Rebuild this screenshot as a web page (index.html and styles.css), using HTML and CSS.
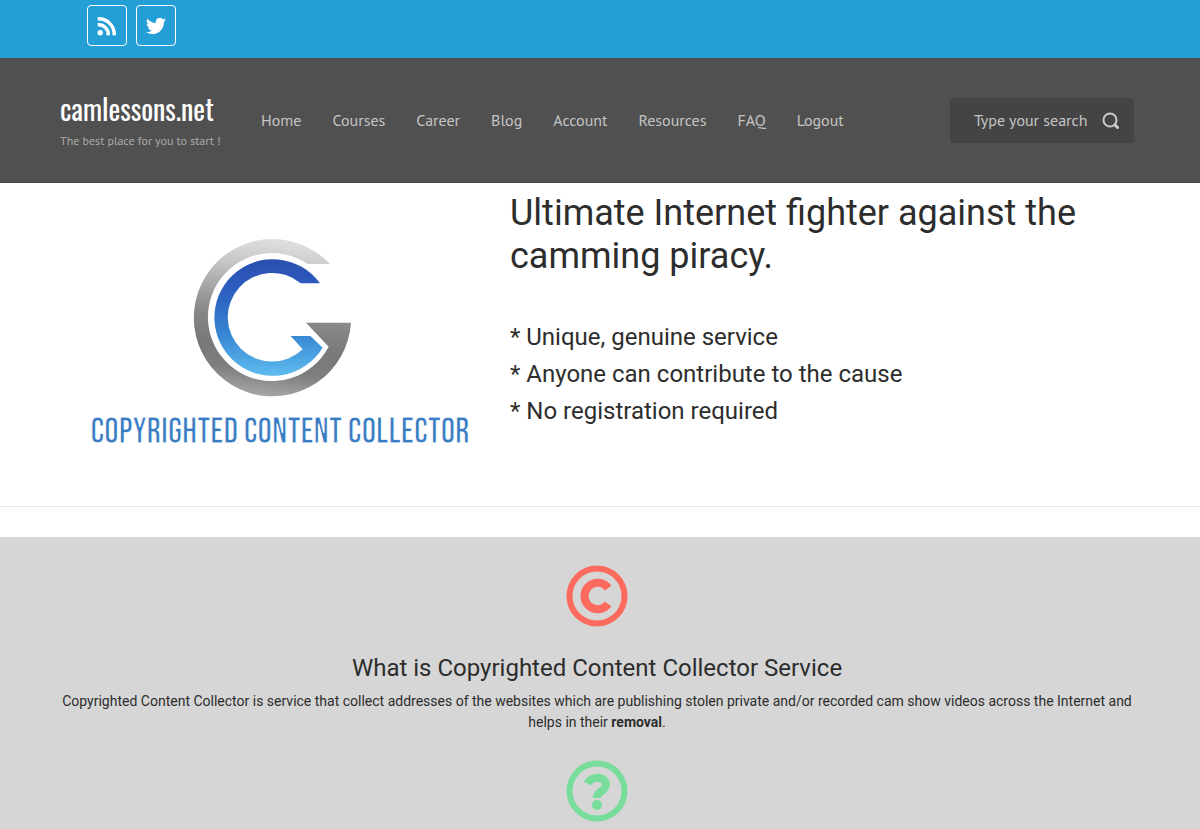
FILE: index.html
```html
<!DOCTYPE html>
<html lang="en">
    <head>
        <title>camlessons.net</title>
        <meta charset="UTF-8" />
        <meta name="viewport" content="width=device-width, initial-scale=1" />
        <link rel="stylesheet" href="styles.css">
    </head>
    <body>
        <div class="topbar">
            <a class="social" href="#" aria-label="RSS feed">
                <svg width="20" height="20" viewBox="0 0 20 20" fill="none" stroke="#fff" stroke-width="3.4">
                    <circle cx="3.2" cy="16.8" r="2.7" fill="#fff" stroke="none" />
                    <path d="M0.7 8.8A9.6 9.6 0 0 1 11.2 19.4" />
                    <path d="M0.7 2.8A15.6 15.6 0 0 1 17.2 19.4" />
                </svg>
            </a>
            <a class="social" href="#" aria-label="Twitter">
                <svg width="20" height="20" viewBox="0 0 24 24" fill="#fff">
                    <path d="M23.9 4.6a10 10 0 0 1-2.8.8 4.9 4.9 0 0 0 2.2-2.7 10 10 0 0 1-3.1 1.2 4.9 4.9 0 0 0-8.4 4.5A14 14 0 0 1 1.7 3.2a4.9 4.9 0 0 0 1.5 6.5 4.9 4.9 0 0 1-2.2-.6v.1a4.9 4.9 0 0 0 3.9 4.8 5 5 0 0 1-2.2.1 4.9 4.9 0 0 0 4.6 3.4A9.9 9.9 0 0 1 0 19.5a14 14 0 0 0 7.5 2.2c9.1 0 14-7.5 14-14v-.6a10 10 0 0 0 2.4-2.5z" />
                </svg>
            </a>
        </div>
        <header class="header">
            <div class="brand">
                <a class="brand-name" href="#">camlessons.net</a>
                <p class="tagline">The best place for you to start !</p>
            </div>
            <nav class="nav">
                <a href="#">Home</a>
                <a href="#">Courses</a>
                <a href="#">Career</a>
                <a href="#">Blog</a>
                <a href="#">Account</a>
                <a href="#">Resources</a>
                <a href="#">FAQ</a>
                <a href="#">Logout</a>
            </nav>
            <form class="search">
                <input type="text" placeholder="Type your search" aria-label="Type your search" />
                <button type="submit" aria-label="Search">
                    <svg width="18" height="18" viewBox="0 0 18 18" fill="none" stroke="#ccc" stroke-width="2">
                        <circle cx="8" cy="9" r="6.5" />
                        <path d="M13 14L15.5 16.5" stroke-width="3" stroke-linecap="round" />
                    </svg>
                </button>
            </form>
        </header>
        <main>
            <section class="hero">
                <div class="logo">
                    <svg class="logo-mark" width="190" height="185" viewBox="0 0 570 555">
                        <defs>
                            <linearGradient id="gray" gradientUnits="userSpaceOnUse" x1="330" y1="41" x2="277" y2="513">
                                <stop offset="0" stop-color="#e2e2e2" />
                                <stop offset="0.2" stop-color="#c4c4c4" />
                                <stop offset="0.5" stop-color="#8a8888" />
                                <stop offset="0.7" stop-color="#7a7777" />
                                <stop offset="0.85" stop-color="#807d7d" />
                                <stop offset="1" stop-color="#a6a4a4" />
                            </linearGradient>
                            <linearGradient id="blue" x1="0" y1="0" x2="0" y2="1">
                                <stop offset="0" stop-color="#2a4fb0" />
                                <stop offset="0.25" stop-color="#2c5cbe" />
                                <stop offset="0.65" stop-color="#3787d2" />
                                <stop offset="1" stop-color="#5fbcf0" />
                            </linearGradient>
                        </defs>
                        <path fill="url(#gray)" d="M450 117H383A192 192 0 1 0 446 365L378 293H513A236 236 0 1 1 450 117Z" />
                        <path fill="url(#blue)" d="M420 175H362A133 133 0 1 0 368 373L332 333H391L428 368A175 175 0 1 1 420 175Z" />
                    </svg>
                    <div class="logo-text">COPYRIGHTED CONTENT COLLECTOR</div>
                </div>
                <div class="intro">
                    <h1>Ultimate Internet fighter against the camming piracy.</h1>
                    <p>* Unique, genuine service</p>
                    <p>* Anyone can contribute to the cause</p>
                    <p>* No registration required</p>
                </div>
            </section>
            <section class="about">
                <svg class="about-icon" width="62" height="62" viewBox="0 0 62 62" fill="none" stroke="#fd6a5e">
                    <circle cx="31" cy="31" r="27.5" stroke-width="6" />
                    <path d="M42.2 23A13.2 13.2 0 1 0 42.2 39" stroke-width="8" />
                </svg>
                <h2>What is Copyrighted Content Collector Service</h2>
                <p>
                    Copyrighted Content Collector is service that collect addresses of the websites which are
                    publishing stolen private and/or recorded cam show videos across the Internet and helps in
                    their <strong>removal</strong>.
                </p>
                <svg class="about-icon" width="62" height="62" viewBox="0 0 62 62" fill="none" stroke="#78dc9b">
                    <circle cx="31" cy="31" r="27.5" stroke-width="6" />
                    <path d="M21.5 23.5C26 15 40 16 39.8 25C39.6 31.5 31 31 30.5 38" stroke-width="8" />
                    <circle cx="31" cy="45" r="5" fill="#78dc9b" stroke="none" />
                </svg>
            </section>
        </main>
    </body>
</html>
```

FILE: styles.css
```css
* {
    box-sizing: border-box;
}
body {
    margin: 0;
    background: #fff;
    color: #2d2d2d;
    font-family: Roboto, sans-serif;
    font-size: 14px;
}
a {
    color: inherit;
    text-decoration: none;
}
h1,
h2,
p {
    margin: 0;
    font-weight: 400;
}

/* Top bar */
.topbar {
    display: flex;
    gap: 9px;
    height: 58px;
    padding: 5px 87px;
    background: #239fd6;
}
.social {
    display: flex;
    align-items: center;
    justify-content: center;
    width: 40px;
    height: 41px;
    border: 1px solid #fff;
    border-radius: 4px;
}

/* Header */
.header {
    display: flex;
    align-items: center;
    min-height: 125px;
    padding: 0 66px 0 60px;
    background: #505050;
    border-bottom: 1px solid #444;
    color: #c4c4c4;
    font-family: "PT Sans", "Noto Sans", sans-serif;
}
.brand {
    flex: none;
    width: 201px;
}
.brand-name {
    display: block;
    color: #fff;
    font-family: Oswald, "Roboto Condensed", "Liberation Sans Narrow", sans-serif;
    font-size: 28px;
    line-height: 42px;
}
.tagline {
    color: #aaa;
    font-size: 12px;
    line-height: 22px;
}
.nav {
    display: flex;
    flex: 1;
    gap: 31px;
    font-size: 16px;
}
.search {
    display: flex;
    align-items: center;
    width: 184px;
    height: 45px;
    padding: 0 14px 0 24px;
    background: #444;
    border-radius: 4px;
}
.search input {
    flex: 1;
    min-width: 0;
    padding: 0;
    border: 0;
    outline: 0;
    background: none;
    color: #c4c4c4;
    font-family: inherit;
    font-size: 16px;
}
.search input::placeholder {
    color: #c4c4c4;
    opacity: 1;
}
.search button {
    display: flex;
    padding: 0;
    border: 0;
    background: none;
    cursor: pointer;
}

/* Intro */
.hero {
    display: flex;
    min-height: 324px;
    padding: 9px 60px 0 80px;
    border-bottom: 1px solid #e8e8e8;
}
.logo {
    display: flex;
    flex: none;
    flex-direction: column;
    align-items: center;
    width: 400px;
    padding-top: 33px;
}
.logo-mark {
    margin: 0 10px 2px 0;
}
.logo-text {
    color: #3a7cc2;
    font-family: "Bebas Neue", "Roboto Condensed", "Liberation Sans Narrow", sans-serif;
    font-size: 36px;
    line-height: 42px;
    white-space: nowrap;
    /* white outline thins the letters */
    -webkit-text-stroke: 1px #fff;
}
.intro {
    flex: 1;
    padding-left: 30px;
}
.intro h1 {
    margin-bottom: 41px;
    font-size: 36px;
    line-height: 43px;
}
.intro p {
    font-size: 24px;
    line-height: 37px;
}

/* About */
.about {
    display: flex;
    flex-direction: column;
    align-items: center;
    min-height: 292px;
    margin-top: 30px;
    padding: 28px 53px 0 47px;
    background: #d6d6d6;
    text-align: center;
}
.about-icon {
    flex: none;
}
.about h2 {
    margin-top: 26px;
    font-size: 24px;
    line-height: 30px;
}
.about p {
    margin: 8px 0 27px;
    line-height: 21px;
}
```
